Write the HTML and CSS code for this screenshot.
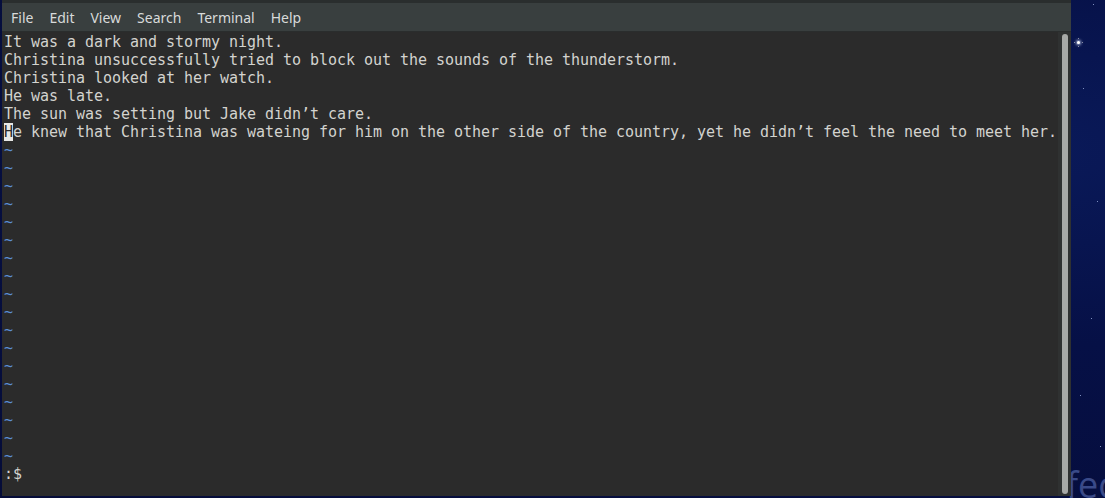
FILE: index.html
```html
<!DOCTYPE html>
<html>
<head>
<meta charset="utf-8">
<link rel="stylesheet" href="styles.css">
</head>
<body>
<div class="desktop">
  <div class="star star-big"></div>
  <div class="star s1"></div>
  <div class="star s2"></div>
  <div class="star s3"></div>
  <div class="star s4"></div>
  <div class="star s5"></div>
  <div class="star s6"></div>
  <div class="fedora">fec</div>
  <div class="window">
    <div class="titlestrip"></div>
    <div class="menubar">
      <span class="menu">File</span>
      <span class="menu">Edit</span>
      <span class="menu">View</span>
      <span class="menu">Search</span>
      <span class="menu">Terminal</span>
      <span class="menu">Help</span>
    </div>
    <div class="body">
      <div class="term">
        <div class="line">It was a dark and stormy night.</div>
        <div class="line">Christina unsuccessfully tried to block out the sounds of the thunderstorm.</div>
        <div class="line">Christina looked at her watch.</div>
        <div class="line">He was late.</div>
        <div class="line">The sun was setting but Jake didn’t care.</div>
        <div class="line"><span class="cursor">H</span>e knew that Christina was wateing for him on the other side of the country, yet he didn’t feel the need to meet her.</div>
        <div class="line tilde">~</div>
        <div class="line tilde">~</div>
        <div class="line tilde">~</div>
        <div class="line tilde">~</div>
        <div class="line tilde">~</div>
        <div class="line tilde">~</div>
        <div class="line tilde">~</div>
        <div class="line tilde">~</div>
        <div class="line tilde">~</div>
        <div class="line tilde">~</div>
        <div class="line tilde">~</div>
        <div class="line tilde">~</div>
        <div class="line tilde">~</div>
        <div class="line tilde">~</div>
        <div class="line tilde">~</div>
        <div class="line tilde">~</div>
        <div class="line tilde">~</div>
        <div class="line tilde">~</div>
        <div class="line">:$</div>
      </div>
      <div class="scroll"><div class="thumb"></div></div>
    </div>
  </div>
</div>
</body>
</html>
```
FILE: styles.css
```css
html, body {
  margin: 0;
  padding: 0;
  width: 1105px;
  height: 498px;
  overflow: hidden;
  background: #070f3d;
}
.desktop {
  position: relative;
  width: 1105px;
  height: 498px;
  background: radial-gradient(ellipse at 90% 30%, #0a1a5a 0%, #061046 40%, #050c38 100%);
  display: flex;
}
.star {
  position: absolute;
  width: 1px;
  height: 1px;
  background: #7f8fc0;
}
.star-big {
  left: 1077px;
  top: 41px;
  width: 3px;
  height: 3px;
  background: #ffffff;
  border-radius: 50%;
  box-shadow: 0 0 3px 1px rgba(220,230,255,0.8), 4px 0 0 -1px #aab, -4px 0 0 -1px #aab, 0 4px 0 -1px #aab, 0 -4px 0 -1px #aab;
}
.s1 { left: 1093px; top: 4px; }
.s2 { left: 1083px; top: 88px; }
.s3 { left: 1097px; top: 201px; }
.s4 { left: 1080px; top: 395px; }
.s5 { left: 1091px; top: 318px; }
.s6 { left: 1100px; top: 446px; }
.fedora {
  position: absolute;
  left: 1066px;
  top: 465px;
  font-family: "Open Sans", "DejaVu Sans", sans-serif;
  font-size: 36px;
  line-height: 40px;
  color: #3a4a88;
}
.window {
  position: relative;
  margin-left: 2px;
  width: 1069px;
  height: 496px;
  background: #2c2c2c;
  display: flex;
  flex-direction: column;
  overflow: hidden;
}
.titlestrip {
  flex-shrink: 0;
  height: 3px;
  background: #2a2e2e;
}
.menubar {
  flex-shrink: 0;
  height: 28px;
  background: #393f3f;
  border-bottom: 1px solid #2a2d2d;
  display: flex;
  align-items: center;
  padding-left: 9px;
  font-family: "Noto Sans", "DejaVu Sans", sans-serif;
  font-size: 14px;
  color: #d8dada;
}
.menu {
  padding-right: 16px;
}
.body {
  flex: 1;
  min-height: 0;
  display: flex;
  background: #2b2b2b;
}
.term {
  flex: 1;
  padding: 1px 0 0 2px;
  font-family: "DejaVu Sans Mono", monospace;
  font-size: 15px;
  line-height: 18px;
  color: #d3d3cf;
}
.line {
  height: 18px;
  white-space: pre;
  letter-spacing: -0.03px;
}
.tilde {
  color: #5b8fd6;
}
.cursor {
  background: #e8e8e6;
  color: #2b2b2b;
}
.scroll {
  width: 13px;
  background: #2f3131;
  padding: 2px 3px 2px 4px;
  box-sizing: border-box;
  display: flex;
}
.thumb {
  flex: 1;
  background: #a7a9a7;
  border-radius: 3px;
}
```
